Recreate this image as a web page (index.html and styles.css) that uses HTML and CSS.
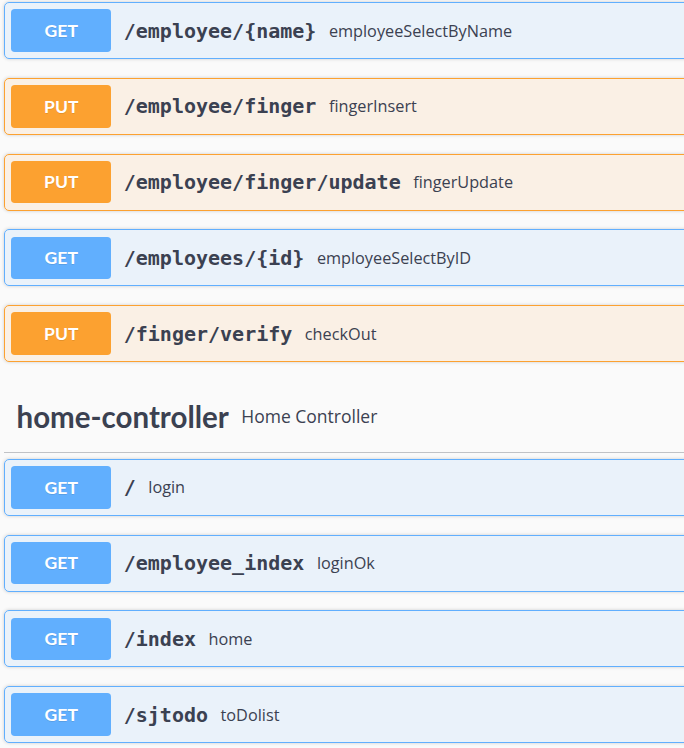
FILE: index.html
```html
<!DOCTYPE html>
<html>
<head>
<meta charset="utf-8">
<link rel="stylesheet" href="styles.css">
</head>
<body>
<div class="wrapper">
  <div class="opblock get">
    <div class="summary"><span class="method">GET</span><span class="path">/employee/{name}</span><span class="desc">employeeSelectByName</span></div>
  </div>
  <div class="opblock put">
    <div class="summary"><span class="method">PUT</span><span class="path">/employee/finger</span><span class="desc">fingerInsert</span></div>
  </div>
  <div class="opblock put">
    <div class="summary"><span class="method">PUT</span><span class="path">/employee/finger/update</span><span class="desc">fingerUpdate</span></div>
  </div>
  <div class="opblock get">
    <div class="summary"><span class="method">GET</span><span class="path">/employees/{id}</span><span class="desc">employeeSelectByID</span></div>
  </div>
  <div class="opblock put">
    <div class="summary"><span class="method">PUT</span><span class="path">/finger/verify</span><span class="desc">checkOut</span></div>
  </div>

  <h4 class="tag"><span class="tag-name">home-controller</span><small class="tag-desc">Home Controller</small></h4>

  <div class="opblock get">
    <div class="summary"><span class="method">GET</span><span class="path">/</span><span class="desc">login</span></div>
  </div>
  <div class="opblock get">
    <div class="summary"><span class="method">GET</span><span class="path">/employee_index</span><span class="desc">loginOk</span></div>
  </div>
  <div class="opblock get">
    <div class="summary"><span class="method">GET</span><span class="path">/index</span><span class="desc">home</span></div>
  </div>
  <div class="opblock get">
    <div class="summary"><span class="method">GET</span><span class="path">/sjtodo</span><span class="desc">toDolist</span></div>
  </div>
</div>
</body>
</html>
```
FILE: styles.css
```css
html, body {
  margin: 0;
  padding: 0;
  background: #fafafa;
  overflow: hidden;
}
body {
  width: 684px;
  height: 748px;
}
.wrapper {
  zoom: 1.25;
  width: 700px;
  padding: 1.6px 0 0 3.2px;
  color: #3b4151;
}
.opblock {
  margin: 0 0 15px;
  border: 1px solid #000;
  border-radius: 4px;
  box-shadow: 0 0 3px rgba(0,0,0,.19);
}
.opblock.get {
  background: rgba(97,175,254,.1);
  border-color: #61affe;
}
.opblock.put {
  background: rgba(252,161,48,.1);
  border-color: #fca130;
}
.summary {
  display: flex;
  align-items: center;
  padding: 5px;
}
.method {
  min-width: 80px;
  box-sizing: border-box;
  padding: 6px 15px;
  border-radius: 3px;
  color: #fff;
  font-family: Lato, "Open Sans", sans-serif;
  font-weight: 700;
  font-size: 14px;
  line-height: 22px;
  text-align: center;
  text-shadow: 0 1px 0 rgba(0,0,0,.1);
}
.get .method { background: #61affe; }
.put .method { background: #fca130; }
.path {
  padding: 0 10px;
  font-family: "DejaVu Sans Mono", "Liberation Mono", monospace;
  font-weight: 700;
  font-size: 16px;
  color: #3b4151;
}
.desc {
  font-family: "Open Sans", sans-serif;
  font-size: 13px;
  color: #3b4151;
}
.tag {
  display: flex;
  align-items: center;
  margin: 0 0 5px;
  padding: 10px 20px 10px 10px;
  border-bottom: 1px solid rgba(59,65,81,.3);
  height: 36.6px;
  box-sizing: content-box;
}
.tag-name {
  font-family: Lato, "Open Sans", sans-serif;
  font-weight: 700;
  font-size: 23.6px;
  color: #3b4151;
}
.tag-desc {
  padding: 0 10px;
  font-family: "Open Sans", sans-serif;
  font-weight: 400;
  font-size: 14px;
  color: #3b4151;
}
```
